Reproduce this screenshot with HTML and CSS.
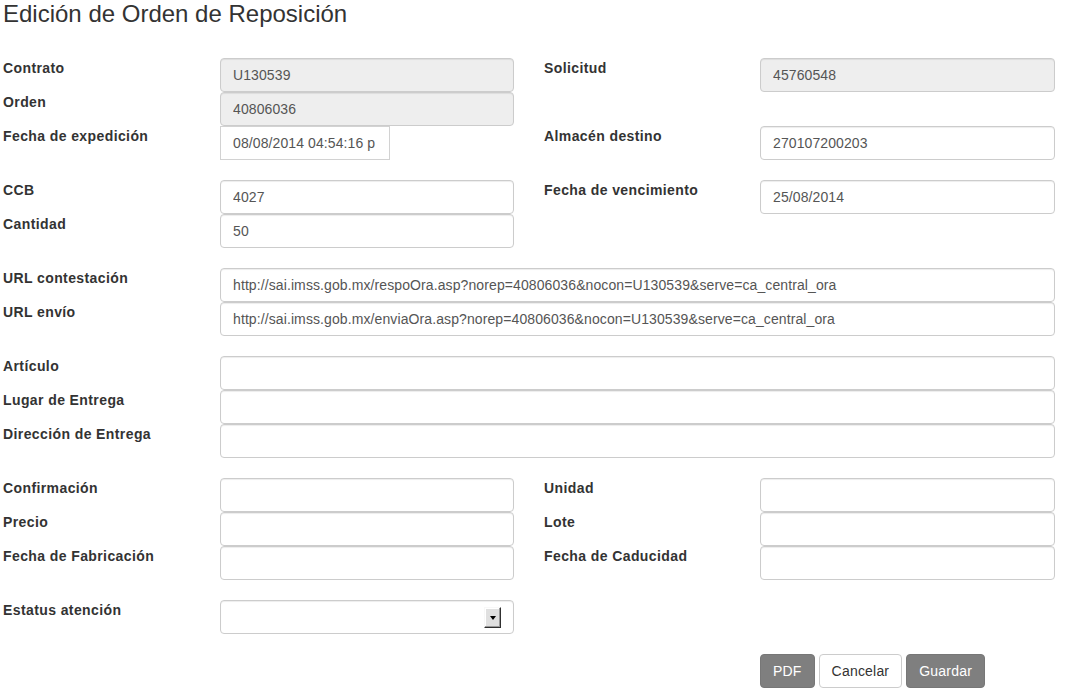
FILE: index.html
```html
<!DOCTYPE html>
<html lang="es">
<head>
<meta charset="utf-8">
<title>Edición de Orden de Reposición</title>
<link rel="stylesheet" href="styles.css">
</head>
<body>
<div class="page">
  <h2 class="title">Edición de Orden de Reposición</h2>

  <div class="group">
    <div class="row">
      <label class="lbl">Contrato</label>
      <input class="ctl disabled" value="U130539" disabled>
      <span></span>
      <label class="lbl">Solicitud</label>
      <input class="ctl disabled" value="45760548" disabled>
    </div>
    <div class="row">
      <label class="lbl">Orden</label>
      <input class="ctl disabled" value="40806036" disabled>
    </div>
    <div class="row">
      <label class="lbl">Fecha de expedición</label>
      <input class="ctl plain" value="08/08/2014 04:54:16 p">
      <span></span>
      <label class="lbl">Almacén destino</label>
      <input class="ctl" value="270107200203">
    </div>
  </div>

  <div class="group">
    <div class="row">
      <label class="lbl">CCB</label>
      <input class="ctl" value="4027">
      <span></span>
      <label class="lbl">Fecha de vencimiento</label>
      <input class="ctl" value="25/08/2014">
    </div>
    <div class="row">
      <label class="lbl">Cantidad</label>
      <input class="ctl" value="50">
    </div>
  </div>

  <div class="group">
    <div class="row">
      <label class="lbl">URL contestación</label>
      <input class="ctl wide" value="http://sai.imss.gob.mx/respoOra.asp?norep=40806036&amp;nocon=U130539&amp;serve=ca_central_ora">
    </div>
    <div class="row">
      <label class="lbl">URL envío</label>
      <input class="ctl wide" value="http://sai.imss.gob.mx/enviaOra.asp?norep=40806036&amp;nocon=U130539&amp;serve=ca_central_ora">
    </div>
  </div>

  <div class="group">
    <div class="row">
      <label class="lbl">Artículo</label>
      <input class="ctl wide" value="">
    </div>
    <div class="row">
      <label class="lbl">Lugar de Entrega</label>
      <input class="ctl wide" value="">
    </div>
    <div class="row">
      <label class="lbl">Dirección de Entrega</label>
      <input class="ctl wide" value="">
    </div>
  </div>

  <div class="group">
    <div class="row">
      <label class="lbl">Confirmación</label>
      <input class="ctl" value="">
      <span></span>
      <label class="lbl">Unidad</label>
      <input class="ctl" value="">
    </div>
    <div class="row">
      <label class="lbl">Precio</label>
      <input class="ctl" value="">
      <span></span>
      <label class="lbl">Lote</label>
      <input class="ctl" value="">
    </div>
    <div class="row">
      <label class="lbl">Fecha de Fabricación</label>
      <input class="ctl" value="">
      <span></span>
      <label class="lbl">Fecha de Caducidad</label>
      <input class="ctl" value="">
    </div>
  </div>

  <div class="group">
    <div class="row">
      <label class="lbl">Estatus atención</label>
      <div class="select"><span class="dd-btn"><span class="dd-arrow"></span></span></div>
    </div>
  </div>

  <div class="actions">
    <button class="btn btn-gray">PDF</button>
    <button class="btn btn-white">Cancelar</button>
    <button class="btn btn-gray">Guardar</button>
  </div>
</div>
</body>
</html>
```

FILE: styles.css
```css
html, body {
  margin: 0;
  padding: 0;
  background: #fff;
}

body {
  font-family: "Liberation Sans", Arial, Helvetica, sans-serif;
  font-size: 14px;
  line-height: 20px;
  color: #333;
}

.page {
  padding: 0 3px;
  width: 1052px;
}

.title {
  margin: 1px 0 31px;
  font-size: 24px;
  line-height: 26px;
  font-weight: normal;
  color: #333;
}

.group {
  margin-bottom: 20px;
}

.row {
  display: grid;
  grid-template-columns: 217px 294px 30px 216px 295px;
  height: 34px;
}

.lbl {
  font-weight: bold;
  font-size: 14px;
  line-height: 20px;
  letter-spacing: 0.4px;
  color: #333;
  white-space: nowrap;
}

.ctl {
  box-sizing: border-box;
  height: 34px;
  width: 100%;
  margin: 0;
  padding: 6px 12px;
  font-family: inherit;
  font-size: 14px;
  line-height: 20px;
  letter-spacing: 0.1px;
  color: #555;
  background: #fff;
  border: 1px solid #ccc;
  border-radius: 4px;
  box-shadow: inset 0 1px 1px rgba(0, 0, 0, 0.075);
  outline: none;
}

.ctl.disabled {
  background: #eee;
  color: #555;
  opacity: 1;
  -webkit-text-fill-color: #555;
}

.ctl.plain {
  width: 170px;
  border-radius: 0;
  border-color: #d2d2d2;
  box-shadow: none;
}

.ctl.wide {
  grid-column: 2 / 6;
}

.select {
  box-sizing: border-box;
  height: 34px;
  border: 1px solid #ccc;
  border-radius: 4px;
  background: #fff;
  box-shadow: inset 0 1px 1px rgba(0, 0, 0, 0.075);
  display: flex;
  align-items: center;
  justify-content: flex-end;
  padding-right: 12px;
}

.dd-btn {
  box-sizing: border-box;
  flex: 0 0 auto;
  width: 17px;
  height: 21px;
  background: #e0e0e0;
  border: 1px solid;
  border-color: #f8f8f8 #303030 #303030 #f8f8f8;
  box-shadow: inset -1px -1px 0 #999, inset 1px 1px 0 #fff;
  display: flex;
  align-items: center;
  justify-content: center;
}

.dd-arrow {
  width: 0;
  height: 0;
  border-left: 3.5px solid transparent;
  border-right: 3.5px solid transparent;
  border-top: 4px solid #000;
  margin-top: 1px;
}

.actions {
  display: flex;
  gap: 4px;
  padding-left: 757px;
}

.btn {
  box-sizing: border-box;
  height: 34px;
  margin: 0;
  padding: 6px 12px;
  font-family: inherit;
  font-size: 14px;
  line-height: 20px;
  letter-spacing: 0.2px;
  border: 1px solid #ccc;
  border-radius: 4px;
  cursor: pointer;
}

.btn-gray {
  background: #7f7f7f;
  border-color: #777;
  color: #fff;
}

.btn-white {
  background: #fff;
  border-color: #ccc;
  color: #333;
}
```
